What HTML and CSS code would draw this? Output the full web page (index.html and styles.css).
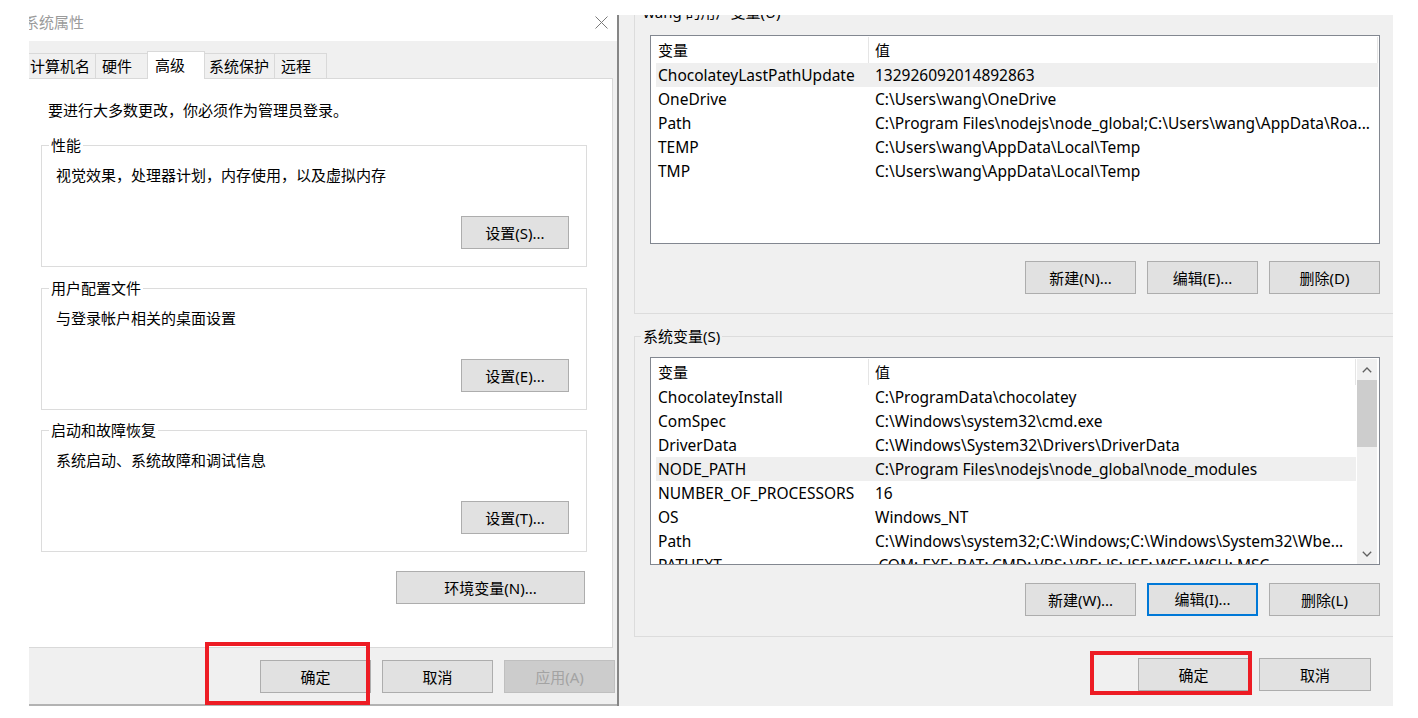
FILE: index.html
```html
<!DOCTYPE html>
<html lang="zh-CN">
<head>
<meta charset="utf-8">
<title>系统属性 - 环境变量</title>
<link rel="stylesheet" href="styles.css">
</head>
<body>
<div class="screen">
  <section class="sysprops">
    <header class="sp-title">
      <span class="sp-title-text">系统属性</span>
      <svg class="close" width="13" height="13" viewBox="0 0 13 13"><path d="M0.5 0.5 L12.5 12.5 M12.5 0.5 L0.5 12.5" stroke="#7a7a7a" stroke-width="1" fill="none"/></svg>
    </header>
    <div class="sp-body">
      <nav class="tabs">
        <div class="tab tab-1">计算机名</div>
        <div class="tab tab-2">硬件</div>
        <div class="tab tab-3 active">高级</div>
        <div class="tab tab-4">系统保护</div>
        <div class="tab tab-5">远程</div>
      </nav>
      <div class="panel">
        <p class="notice">要进行大多数更改，你必须作为管理员登录。</p>
        <div class="group">
          <div class="legend">性能</div>
          <div class="desc">视觉效果，处理器计划，内存使用，以及虚拟内存</div>
          <button class="btn btn-set">设置(S)...</button>
        </div>
        <div class="group group-next">
          <div class="legend">用户配置文件</div>
          <div class="desc">与登录帐户相关的桌面设置</div>
          <button class="btn btn-set">设置(E)...</button>
        </div>
        <div class="group group-next">
          <div class="legend">启动和故障恢复</div>
          <div class="desc">系统启动、系统故障和调试信息</div>
          <button class="btn btn-set">设置(T)...</button>
        </div>
        <button class="btn btn-env">环境变量(N)...</button>
      </div>
      <footer class="sp-footer">
        <button class="btn btn-foot">确定</button>
        <button class="btn btn-foot">取消</button>
        <button class="btn btn-foot btn-disabled" disabled>应用(A)</button>
      </footer>
    </div>
  </section>

  <section class="envvars">
    <div class="evgroup evgroup-user">
      <div class="evlegend">wang 的用户变量(U)</div>
      <div class="list list-user">
        <div class="lv-content">
          <div class="lv-head"><div class="c1 h1">变量</div><div class="c2">值</div></div>
          <div class="lv-row hl"><div class="c1">ChocolateyLastPathUpdate</div><div class="c2">132926092014892863</div></div>
          <div class="lv-row"><div class="c1">OneDrive</div><div class="c2">C:\Users\wang\OneDrive</div></div>
          <div class="lv-row"><div class="c1">Path</div><div class="c2">C:\Program Files\nodejs\node_global;C:\Users\wang\AppData\Roa...</div></div>
          <div class="lv-row"><div class="c1">TEMP</div><div class="c2">C:\Users\wang\AppData\Local\Temp</div></div>
          <div class="lv-row"><div class="c1">TMP</div><div class="c2">C:\Users\wang\AppData\Local\Temp</div></div>
        </div>
      </div>
      <div class="evbtns">
        <button class="btn btn-ev">新建(N)...</button>
        <button class="btn btn-ev">编辑(E)...</button>
        <button class="btn btn-ev">删除(D)</button>
      </div>
    </div>

    <div class="evgroup evgroup-sys">
      <div class="evlegend">系统变量(S)</div>
      <div class="list list-sys">
        <div class="lv-content">
          <div class="lv-head"><div class="c1 h1">变量</div><div class="c2 h2">值</div></div>
          <div class="lv-row"><div class="c1">ChocolateyInstall</div><div class="c2">C:\ProgramData\chocolatey</div></div>
          <div class="lv-row"><div class="c1">ComSpec</div><div class="c2">C:\Windows\system32\cmd.exe</div></div>
          <div class="lv-row"><div class="c1">DriverData</div><div class="c2">C:\Windows\System32\Drivers\DriverData</div></div>
          <div class="lv-row hl"><div class="c1">NODE_PATH</div><div class="c2">C:\Program Files\nodejs\node_global\node_modules</div></div>
          <div class="lv-row"><div class="c1">NUMBER_OF_PROCESSORS</div><div class="c2">16</div></div>
          <div class="lv-row"><div class="c1">OS</div><div class="c2">Windows_NT</div></div>
          <div class="lv-row"><div class="c1">Path</div><div class="c2">C:\Windows\system32;C:\Windows;C:\Windows\System32\Wbe...</div></div>
          <div class="lv-row"><div class="c1">PATHEXT</div><div class="c2">.COM;.EXE;.BAT;.CMD;.VBS;.VBE;.JS;.JSE;.WSF;.WSH;.MSC</div></div>
        </div>
        <div class="scrollbar">
          <div class="sb-arrow"><svg width="10" height="6" viewBox="0 0 10 6"><path d="M0.8 5.2 L5 1 L9.2 5.2" stroke="#606060" stroke-width="1.3" fill="none"/></svg></div>
          <div class="sb-thumb"></div>
          <div class="sb-track"></div>
          <div class="sb-arrow"><svg width="10" height="6" viewBox="0 0 10 6"><path d="M0.8 0.8 L5 5 L9.2 0.8" stroke="#606060" stroke-width="1.3" fill="none"/></svg></div>
        </div>
      </div>
      <div class="evbtns">
        <button class="btn btn-ev">新建(W)...</button>
        <button class="btn btn-ev btn-focus">编辑(I)...</button>
        <button class="btn btn-ev">删除(L)</button>
      </div>
    </div>

    <footer class="ev-footer">
      <button class="btn btn-ok">确定</button>
      <button class="btn btn-cancel">取消</button>
    </footer>
  </section>

  <div class="mark mark-left"></div>
  <div class="mark mark-right"></div>
</div>
</body>
</html>
```
FILE: styles.css
```css
html, body {
  margin: 0;
  padding: 0;
  background: #ffffff;
}
body {
  font-family: "Noto Sans", "Noto Sans CJK SC", sans-serif;
  font-size: 15px;
  line-height: 20px;
  color: #000;
}
.screen {
  position: relative;
  width: 1418px;
  height: 718px;
  display: flex;
  align-items: flex-start;
  padding-left: 29px;
  box-sizing: border-box;
  overflow: hidden;
}

/* ---------- left window: 系统属性 ---------- */
.sysprops {
  width: 588px;
  height: 706px;
  flex: none;
  overflow: hidden;
  display: flex;
  flex-direction: column;
}
.sp-title {
  height: 41px;
  flex: none;
  background: #fff;
  display: flex;
  align-items: flex-start;
}
.sp-title-text {
  margin-left: -5px;
  margin-top: 12px;
  font-size: 15px;
  color: #9b9b9b;
}
.close {
  margin-left: auto;
  margin-right: 9px;
  margin-top: 16px;
}
.sp-body {
  flex: 1;
  background: #f0f0f0;
  border-bottom: 2px solid #b3b3b3;
  display: flex;
  flex-direction: column;
}
.tabs {
  display: flex;
  align-items: flex-start;
  height: 28px;
  margin-top: 10px;
  margin-left: -6px;
  margin-bottom: -1px;
  position: relative;
  z-index: 1;
}
.tab {
  box-sizing: border-box;
  height: 25px;
  margin-top: 2px;
  border: 1px solid #d9d9d9;
  border-bottom: none;
  background: #f0f0f0;
  padding-top: 2px;
  white-space: nowrap;
  margin-left: -1px;
}
.tab-1 { width: 73px; padding-left: 6px; margin-left: 0; }
.tab-2 { width: 53px; padding-left: 6px; }
.tab-3 { width: 58px; padding-left: 7px; }
.tab-4 { width: 71px; padding-left: 4px; }
.tab-5 { width: 53px; padding-left: 6px; }
.tab.active {
  height: 28px;
  margin-top: 0;
  background: #fff;
  padding-top: 3px;
  position: relative;
  z-index: 2;
}
.panel {
  box-sizing: border-box;
  height: 570px;
  margin-left: -6px;
  margin-right: 4px;
  background: #fff;
  border: 1px solid #d9d9d9;
  display: flex;
  flex-direction: column;
  flex: none;
}
.notice {
  margin: 21px 0 0 24px;
}
.group {
  box-sizing: border-box;
  height: 122px;
  margin: 25px 25px 0 17px;
  border: 1px solid #dcdcdc;
  display: flex;
  flex-direction: column;
  padding-bottom: 17px;
}
.group-next { margin-top: 21px; }
.group-next + .group-next { margin-top: 20px; }
.legend {
  align-self: flex-start;
  margin: -11px 0 0 7px;
  padding: 0 2px;
  background: #fff;
}
.desc {
  margin: 10px 0 0 14px;
}
.btn {
  box-sizing: border-box;
  height: 33px;
  border: 1px solid #adadad;
  background: #e1e1e1;
  font: inherit;
  color: #000;
  padding: 0;
  line-height: 30px;
  white-space: nowrap;
}
.btn-set {
  width: 108px;
  align-self: flex-end;
  margin-top: auto;
  margin-right: 17px;
}
.btn-env {
  width: 189px;
  align-self: flex-end;
  margin: 19px 27px 0 0;
}
.sp-footer {
  display: flex;
  justify-content: flex-end;
  gap: 11px;
  padding-top: 12px;
  padding-right: 2px;
}
.btn-foot { width: 111px; }
.btn-disabled {
  background: #cccccc;
  border-color: #bfbfbf;
  color: #a3a3a3;
}

/* ---------- right window: 环境变量 ---------- */
.envvars {
  width: 774px;
  height: 691px;
  margin-top: 15px;
  flex: none;
  background: #f0f0f0;
  border-left: 2px solid #868686;
  overflow: hidden;
  display: flex;
  flex-direction: column;
}
.evgroup {
  box-sizing: border-box;
  width: 820px;
  margin-left: 15px;
  border: 1px solid #dcdcdc;
  display: flex;
  flex-direction: column;
  flex: none;
}
.evgroup-user {
  margin-top: -3px;
  padding-bottom: 19px;
}
.evgroup-sys {
  margin-top: 22px;
  padding-bottom: 20px;
}
.evlegend {
  align-self: flex-start;
  margin: -11px 0 0 6px;
  padding: 0 2px;
  background: #f0f0f0;
  white-space: nowrap;
}
.list {
  box-sizing: border-box;
  width: 730px;
  margin-left: 15px;
  border: 1px solid #828790;
  background: #fff;
  overflow: hidden;
  display: flex;
}
.list-user {
  height: 209px;
  margin-top: 13px;
}
.list-sys {
  height: 208px;
  margin-top: 11px;
}
.lv-content {
  flex: 1;
  min-width: 0;
  padding-left: 5px;
  padding-right: 1px;
}
.lv-head {
  display: flex;
  height: 27px;
  align-items: center;
}
.lv-row {
  display: flex;
  height: 24px;
  align-items: center;
  font-size: 15.5px;
}
.lv-row.hl { background: #efefef; }
.c1 {
  box-sizing: border-box;
  width: 213px;
  flex: none;
  padding-left: 2px;
  white-space: nowrap;
  overflow: hidden;
}
.c2 {
  flex: 1;
  min-width: 0;
  padding-left: 6px;
  white-space: nowrap;
  overflow: hidden;
}
.lv-head .h1 {
  border-right: 1px solid #e5e5e5;
  height: 26px;
  line-height: 27px;
}
.lv-head .c2 {
  height: 26px;
  line-height: 27px;
  border-right: 1px solid #e5e5e5;
}
.scrollbar {
  width: 20px;
  flex: none;
  margin: 1px 2px 0 0;
  height: 205px;
  background: #f0f0f0;
  display: flex;
  flex-direction: column;
}
.sb-arrow {
  height: 21px;
  display: flex;
  align-items: center;
  justify-content: center;
  flex: none;
}
.sb-thumb {
  height: 67px;
  background: #cdcdcd;
  flex: none;
}
.sb-track { flex: 1; }
.evbtns {
  width: 730px;
  margin-left: 15px;
  display: flex;
  justify-content: flex-end;
  gap: 11px;
}
.evgroup-user .evbtns { margin-top: 17px; }
.evgroup-sys .evbtns { margin-top: 18px; }
.btn-ev { width: 111px; }
.btn-focus {
  border: 2px solid #0078d7;
  line-height: 29px;
}
.ev-footer {
  display: flex;
  justify-content: flex-end;
  gap: 10px;
  margin-top: 21px;
  padding-right: 22px;
}
.btn-ok { width: 111px; }
.btn-cancel { width: 112px; }

/* ---------- red annotation boxes ---------- */
.mark {
  position: absolute;
  box-sizing: border-box;
  border: 4px solid #ed1c24;
  pointer-events: none;
}
.mark-left {
  left: 205px;
  top: 642px;
  width: 165px;
  height: 63px;
}
.mark-right {
  left: 1090px;
  top: 651px;
  width: 162px;
  height: 44px;
}
```
